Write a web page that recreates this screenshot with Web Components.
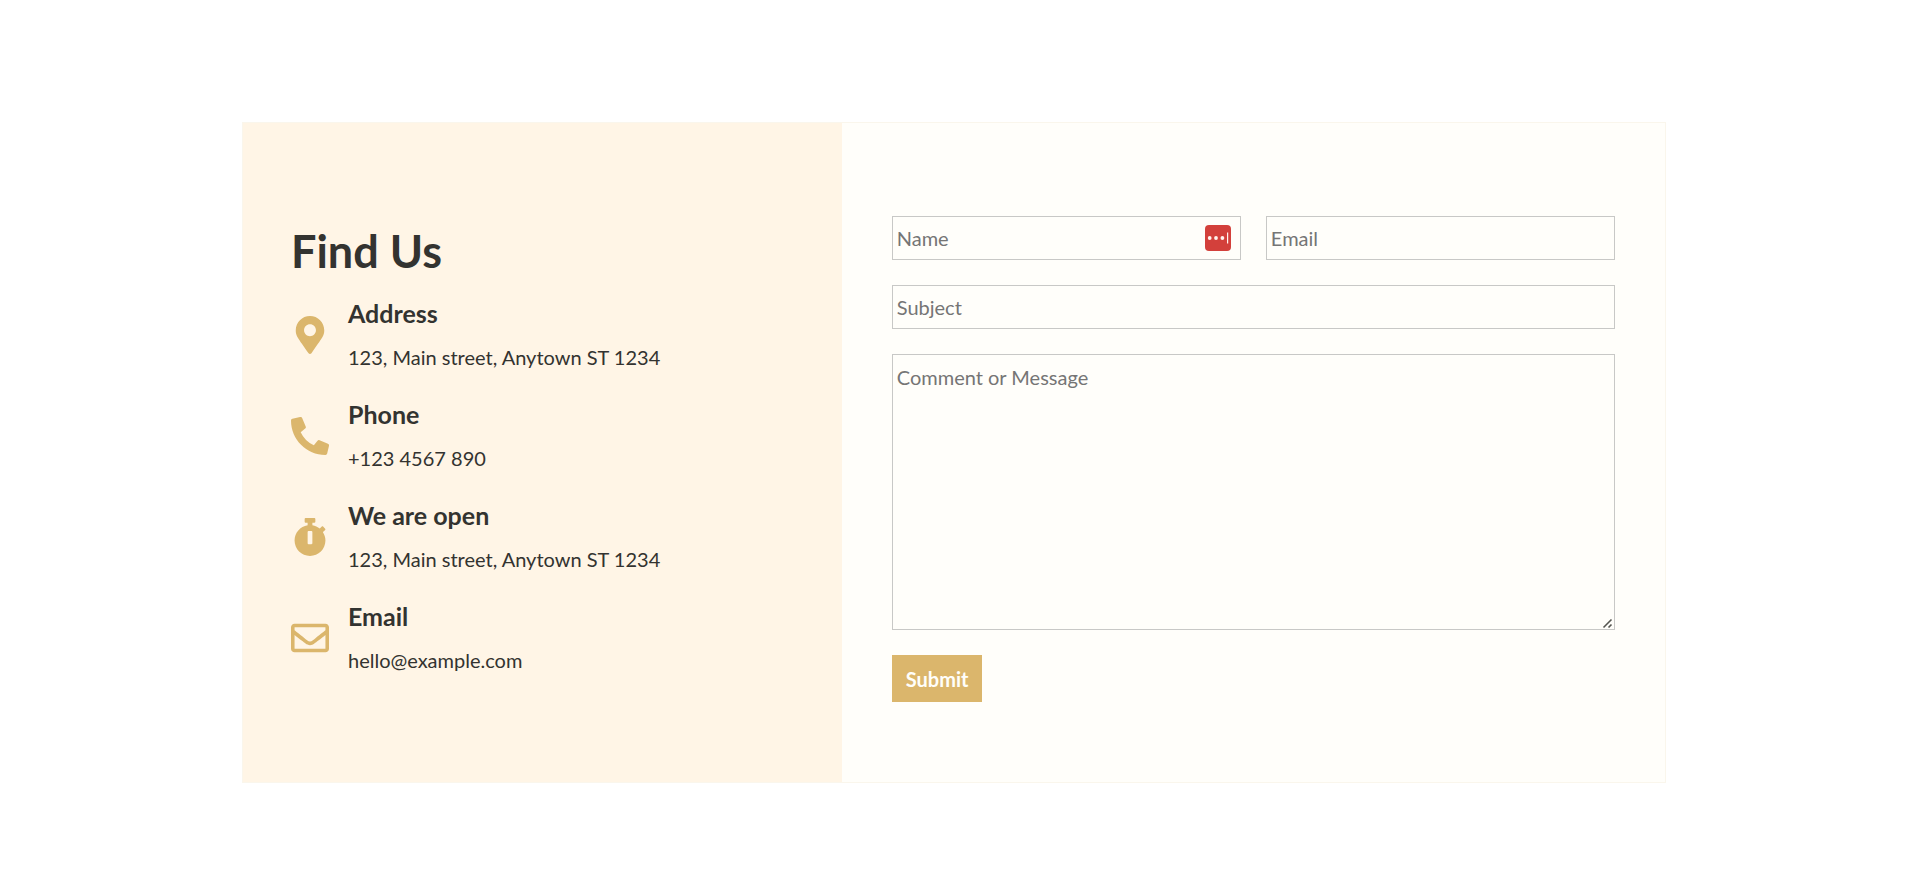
<!DOCTYPE html>
<html lang="en">
<head>
<meta charset="utf-8">
<meta name="viewport" content="width=device-width, initial-scale=1">
<title>Find Us</title>
<style>
    body {
        margin: 0;
        padding: 122px 24px 80px 26px;
        background-color: #fff;
        color: #333330;
        font: 20px/32px Lato, sans-serif;
        --accent: #dbb66c;
        --cream: #fff5e6;
        --paper: #fffefa;
    }
</style>
</head>
<body>
    <contact-card>
        <find-us slot="info" heading="Find Us">
            <contact-item icon="marker" label="Address">123, Main street, Anytown ST 1234</contact-item>
            <contact-item icon="phone" label="Phone">+123 4567 890</contact-item>
            <contact-item icon="stopwatch" label="We are open">123, Main street, Anytown ST 1234</contact-item>
            <contact-item icon="envelope" label="Email">hello@example.com</contact-item>
        </find-us>
        <contact-form slot="form"></contact-form>
    </contact-card>

<script>
    const icons = {
        marker: {
            width: 384,
            path: "M172.268 501.67C26.97 291.031 0 269.413 0 192 0 85.961 85.961 0 192 0s192 85.961 192 192c0 77.413-26.97 99.031-172.268 309.67-9.535 13.774-29.93 13.773-39.464 0zM192 272c44.183 0 80-35.817 80-80s-35.817-80-80-80-80 35.817-80 80 35.817 80 80 80z",
        },
        phone: {
            width: 512,
            path: "M497.39 361.8l-112-48a24 24 0 0 0-28 6.9l-49.6 60.6A370.66 370.66 0 0 1 130.6 204.11l60.6-49.6a23.94 23.94 0 0 0 6.9-28l-48-112A24.16 24.16 0 0 0 122.6.61l-104 24A24 24 0 0 0 0 48c0 256.5 207.9 464 464 464a24 24 0 0 0 23.4-18.6l24-104a24.29 24.29 0 0 0-14.01-27.6z",
        },
        stopwatch: {
            width: 448,
            path: "M432 304c0 114.9-93.1 208-208 208S16 418.9 16 304c0-104 76.3-190.2 176-205.5V64h-28c-6.6 0-12-5.4-12-12V12c0-6.6 5.4-12 12-12h120c6.6 0 12 5.4 12 12v40c0 6.6-5.4 12-12 12h-28v34.5c37.5 5.8 71.7 21.6 99.7 44.6l27.5-27.5c4.7-4.7 12.3-4.7 17 0l28.3 28.3c4.7 4.7 4.7 12.3 0 17l-29.4 29.4-.6.6C419.7 223.3 432 262.2 432 304zm-176 36V188.5c0-6.6-5.4-12-12-12h-40c-6.6 0-12 5.4-12 12V340c0 6.6 5.4 12 12 12h40c6.6 0 12-5.4 12-12z",
        },
        envelope: {
            width: 512,
            path: "M464 64H48C21.49 64 0 85.49 0 112v288c0 26.51 21.49 48 48 48h416c26.51 0 48-21.49 48-48V112c0-26.51-21.49-48-48-48zm0 48v40.805c-22.422 18.259-58.168 46.651-134.587 106.49-16.841 13.247-50.201 45.072-73.413 44.701-23.208.375-56.579-31.459-73.413-44.701C106.18 199.465 70.425 171.067 48 152.805V112h416zM48 400V214.398c22.914 18.251 55.409 43.862 104.938 82.646 21.857 17.205 60.134 55.186 103.062 54.955 42.717.231 80.509-37.199 103.053-54.947 49.528-38.783 82.032-64.401 104.947-82.653V400H48z",
        },
    };

    class ContactCard extends HTMLElement {
        constructor() {
            super();

            this.attachShadow({ mode: "open" });

            const html = /*html*/ `
                <slot name="info"></slot>
                <slot name="form"></slot>
            `;

            const css = /*css*/ `
                :host {
                    display: grid;
                    grid-template-columns: 8fr 11fr;
                    box-sizing: border-box;
                    max-width: 1424px;
                    margin: 0 auto;
                    border: 1px solid #faf6ec;
                    background-color: var(--paper);
                }

                @media (max-width: 900px) {
                    :host {
                        grid-template-columns: 1fr;
                    }
                }
            `;

            this.shadowRoot.innerHTML = html + `<style>${css}</style>`;
        }
    }

    class FindUs extends HTMLElement {
        constructor() {
            super();

            this.attachShadow({ mode: "open" });

            const html = /*html*/ `
                <h2></h2>
                <div class="items"><slot></slot></div>
            `;

            const css = /*css*/ `
                :host {
                    display: block;
                    padding: 100px 48px;
                    background-color: var(--cream);
                }

                h2 {
                    margin: 0 0 18px;
                    font-size: 45px;
                    line-height: 56px;
                }

                .items {
                    display: flex;
                    flex-direction: column;
                    gap: 25px;
                }
            `;

            this.shadowRoot.innerHTML = html + `<style>${css}</style>`;
            this.shadowRoot.querySelector("h2").textContent = this.getAttribute("heading");
        }
    }

    class ContactItem extends HTMLElement {
        constructor() {
            super();

            this.attachShadow({ mode: "open" });
            const icon = icons[this.getAttribute("icon")];

            const html = /*html*/ `
                <svg viewBox="0 0 ${icon.width} 512" aria-hidden="true"><path d="${icon.path}"/></svg>
                <div>
                    <h3></h3>
                    <p><slot></slot></p>
                </div>
            `;

            const css = /*css*/ `
                :host {
                    display: flex;
                    align-items: center;
                    gap: 19px;
                }

                svg {
                    flex: none;
                    width: 38px;
                    height: 38px;
                    fill: var(--accent);
                }

                h3 {
                    margin: 0 0 12px;
                    font-size: 25px;
                    line-height: 32px;
                }

                p {
                    margin: 0;
                }
            `;

            this.shadowRoot.innerHTML = html + `<style>${css}</style>`;
            this.shadowRoot.querySelector("h3").textContent = this.getAttribute("label");
        }
    }

    class ContactForm extends HTMLElement {
        constructor() {
            super();

            this.attachShadow({ mode: "open" });

            const html = /*html*/ `
                <form>
                    <div class="name">
                        <input type="text" name="name" placeholder="Name" aria-label="Name">
                        <autofill-badge></autofill-badge>
                    </div>
                    <input type="email" name="email" placeholder="Email" aria-label="Email">
                    <input class="wide" type="text" name="subject" placeholder="Subject" aria-label="Subject">
                    <textarea class="wide" name="message" placeholder="Comment or Message" aria-label="Comment or Message"></textarea>
                    <button type="submit">Submit</button>
                </form>
            `;

            const css = /*css*/ `
                :host {
                    display: block;
                    padding: 93px 50px 80px;
                }

                form {
                    display: grid;
                    grid-template-columns: 1fr 1fr;
                    gap: 25px;
                }

                .name {
                    position: relative;
                }

                .wide {
                    grid-column: 1 / -1;
                }

                input,
                textarea {
                    display: block;
                    box-sizing: border-box;
                    width: 100%;
                    height: 44px;
                    margin: 0;
                    padding: 0 4px;
                    border: 1px solid #c8c8c6;
                    border-radius: 0;
                    background-color: transparent;
                    color: inherit;
                    font: inherit;
                    line-height: 24px;
                }

                textarea {
                    height: 276px;
                    padding: 10px 4px;
                    resize: vertical;
                }

                textarea::-webkit-resizer {
                    background: url("data:image/svg+xml,%3Csvg xmlns='http://www.w3.org/2000/svg' width='15' height='15'%3E%3Cpath d='M4.5 13.5l8-8M9.5 13.5l3-3' stroke='%23555550' stroke-width='1.6'/%3E%3C/svg%3E") right bottom no-repeat;
                }

                ::placeholder {
                    color: #757575;
                }

                autofill-badge {
                    position: absolute;
                    top: 9px;
                    right: 10px;
                }

                button {
                    justify-self: start;
                    height: 47px;
                    padding: 0 14px;
                    border: none;
                    background-color: var(--accent);
                    color: var(--paper);
                    font: inherit;
                    font-weight: 700;
                    cursor: pointer;
                }
            `;

            this.shadowRoot.innerHTML = html + `<style>${css}</style>`;

            this.shadowRoot.querySelector("form").addEventListener("submit", (event) => {
                event.preventDefault();
            });
        }
    }

    // Password manager marker at the end of the name field
    class AutofillBadge extends HTMLElement {
        constructor() {
            super();

            this.attachShadow({ mode: "open" });

            const html = /*html*/ `
                <svg viewBox="0 0 26 26" aria-hidden="true">
                    <rect width="26" height="26" rx="4" fill="#d3403b"/>
                    <g fill="#fff3ee">
                        <circle cx="4.7" cy="13" r="1.9"/>
                        <circle cx="11" cy="13" r="1.9"/>
                        <circle cx="17.4" cy="13" r="1.9"/>
                        <rect x="22" y="7.5" width="1.2" height="11"/>
                    </g>
                </svg>
            `;

            const css = /*css*/ `
                :host {
                    display: block;
                    width: 26px;
                    height: 26px;
                }

                svg {
                    display: block;
                }
            `;

            this.shadowRoot.innerHTML = html + `<style>${css}</style>`;
        }
    }

    customElements.define("contact-card", ContactCard);
    customElements.define("find-us", FindUs);
    customElements.define("contact-item", ContactItem);
    customElements.define("contact-form", ContactForm);
    customElements.define("autofill-badge", AutofillBadge);
</script>
</body>
</html>
